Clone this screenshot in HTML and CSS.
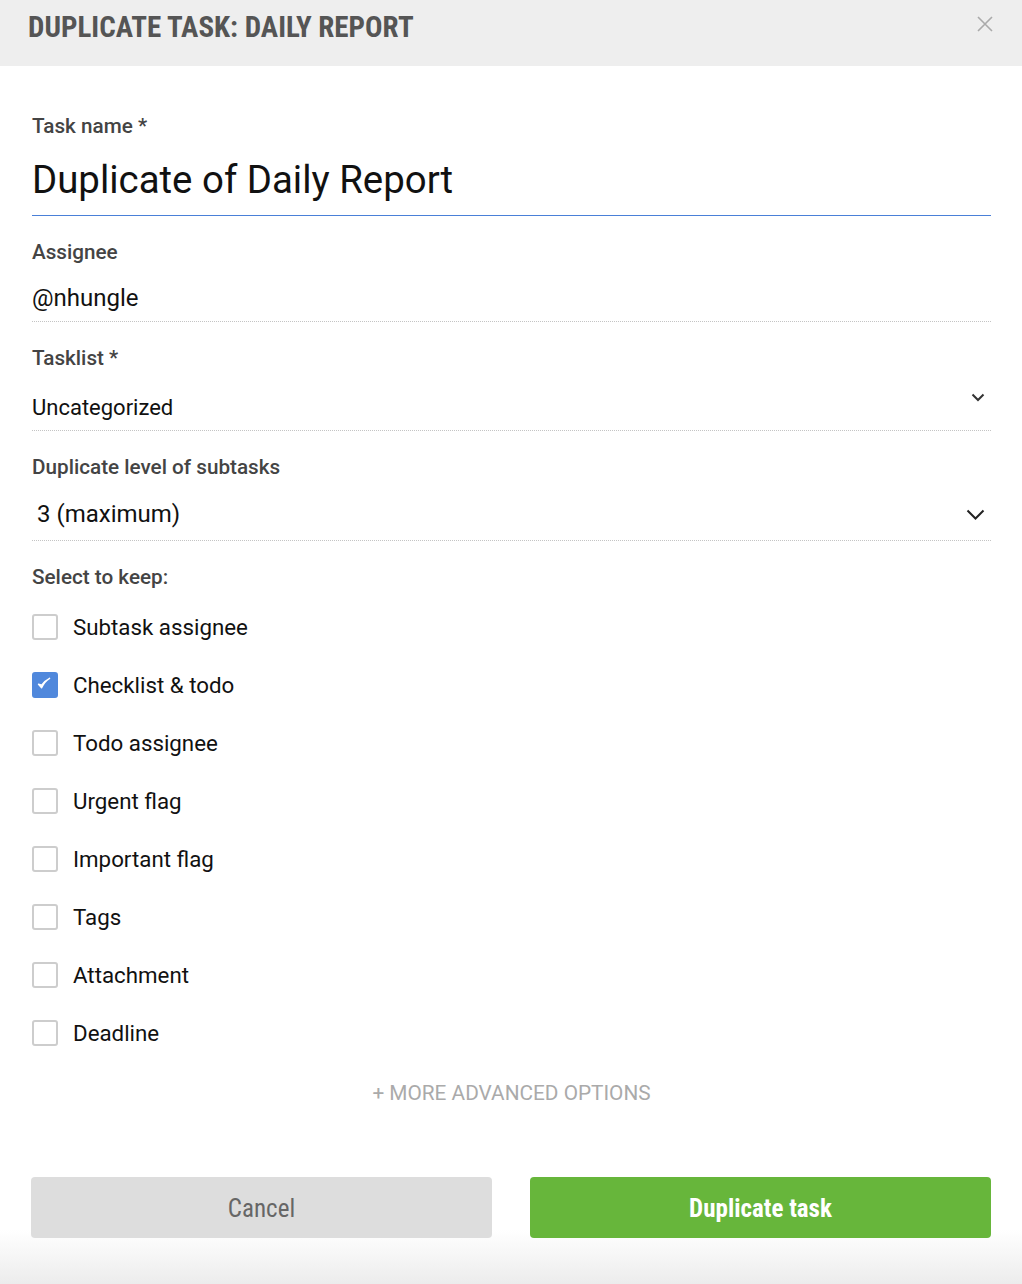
FILE: index.html
```html
<!DOCTYPE html>
<html>
<head>
<meta charset="utf-8">
<link rel="stylesheet" href="styles.css">
</head>
<body>
<div class="modal">
  <header class="head">
    <h1 class="title">DUPLICATE TASK: DAILY REPORT</h1>
    <span class="close">
      <svg width="16" height="16" viewBox="0 0 16 16"><path d="M1 1L15 15M15 1L1 15" stroke="#aaa" stroke-width="1.6" fill="none"/></svg>
    </span>
  </header>
  <main class="body">
    <div class="field name">
      <div class="label">Task name *</div>
      <div class="name-input">Duplicate of Daily Report</div>
      <div class="name-line"></div>
    </div>
    <div class="field">
      <div class="label">Assignee</div>
      <div class="value dotted assignee">@nhungle</div>
    </div>
    <div class="field">
      <div class="label">Tasklist *</div>
      <div class="value dotted select"><span>Uncategorized</span>
        <svg class="chev small" width="14" height="9" viewBox="0 0 14 9"><path d="M1.5 1.5L7 7L12.5 1.5" stroke="#333" stroke-width="2" fill="none"/></svg>
      </div>
    </div>
    <div class="field">
      <div class="label">Duplicate level of subtasks</div>
      <div class="value dotted select big"><span>3 (maximum)</span>
        <svg class="chev" width="19" height="11" viewBox="0 0 19 11"><path d="M1.5 1.5L9.5 9.5L17.5 1.5" stroke="#222" stroke-width="2" fill="none"/></svg>
      </div>
    </div>
    <div class="label keep">Select to keep:</div>
    <ul class="checks">
      <li><span class="box"></span>Subtask assignee</li>
      <li><span class="box on"><svg width="14" height="13" viewBox="0 0 14 13"><path d="M1.5 7.2L4.6 10.8C6.2 7 8.6 3.8 12.6 1.3C8.8 3.2 6.4 5.6 4.7 8.2Z" fill="#fff" stroke="#fff" stroke-width="1.4" stroke-linejoin="round"/></svg></span>Checklist &amp; todo</li>
      <li><span class="box"></span>Todo assignee</li>
      <li><span class="box"></span>Urgent flag</li>
      <li><span class="box"></span>Important flag</li>
      <li><span class="box"></span>Tags</li>
      <li><span class="box"></span>Attachment</li>
      <li><span class="box"></span>Deadline</li>
    </ul>
    <div class="more">+ MORE ADVANCED OPTIONS</div>
    <div class="buttons">
      <button class="btn cancel">Cancel</button>
      <button class="btn primary">Duplicate task</button>
    </div>
  </main>
</div>
</body>
</html>
```
FILE: styles.css
```css
* { box-sizing: border-box; }
html, body { margin: 0; padding: 0; }
body {
  width: 1022px;
  height: 1284px;
  font-family: Roboto, "Liberation Sans", sans-serif;
  color: #111;
  background: linear-gradient(to bottom, #fff 0, #fff 1230px, #ececec 1284px);
  overflow: hidden;
}
.head {
  height: 66px;
  background: #eeeeee;
  display: flex;
  align-items: flex-start;
  justify-content: space-between;
  padding: 0 29px 0 28px;
}
.title {
  margin: 11px 0 0;
  font-family: "Roboto Condensed", Roboto, sans-serif;
  font-weight: 700;
  font-size: 29px;
  line-height: 32px;
  color: #555;
}
.close { margin-top: 16px; display: block; line-height: 0; }
.body { padding: 0 31px 0 32px; }
.label {
  font-size: 20.7px;
  font-weight: 500;
  color: #444;
  line-height: 24px;
}
.field { padding-top: 24px; }
.body > .field:first-child { padding-top: 48px; }
.name-input {
  font-size: 38.4px;
  line-height: 48px;
  color: #111;
  padding-top: 18px;
  padding-bottom: 11px;
}
.name-line {
  height: 1px;
  background-color: #4a80d8;
}
.value {
  font-size: 23px;
  line-height: 28px;
  color: #111;
  padding-top: 19px;
  padding-bottom: 10px;
}
.value.assignee { font-size: 24px; padding-top: 20px; padding-bottom: 9px; }
.dotted { border-bottom: 1px dotted #c4c4c4; }
.select { display: flex; align-items: center; justify-content: space-between; font-size: 22px; padding-top: 24px; padding-bottom: 8px; }
.select .chev.small { margin-right: 6px; margin-top: -22px; }
.select.big { font-size: 24px; padding-left: 5px; padding-top: 21px; padding-bottom: 12px; }
.select.big .chev { margin-right: 6px; }
.label.keep { padding-top: 24px; }
.checks { list-style: none; margin: 9px 0 0; padding: 0; }
.checks li {
  display: flex;
  align-items: center;
  height: 58px;
  font-size: 22.3px;
  color: #111;
}
.box {
  width: 26px;
  height: 26px;
  border: 2px solid #cdcdcd;
  border-radius: 3px;
  margin-right: 15px;
  display: flex;
  align-items: center;
  justify-content: center;
  background: #fff;
}
.box.on { background: #5088dc; border-color: #5088dc; }
.box.on svg { margin: -3px 0 0 -2px; }
.more {
  text-align: center;
  color: #aaa;
  font-size: 20.8px;
  margin-top: 18px;
  line-height: 26px;
}
.buttons {
  display: flex;
  gap: 38px;
  margin-top: 71px;
  margin-left: -1px;
}
.btn {
  flex: 1;
  height: 61px;
  border: none;
  border-radius: 4px;
  font-family: "Roboto Condensed", Roboto, sans-serif;
  font-size: 25px;
  padding-top: 2px;
}
.cancel { background: #dddddd; color: #666; font-weight: 400; }
.primary { background: #67b63b; color: #fff; font-weight: 700; }
```
